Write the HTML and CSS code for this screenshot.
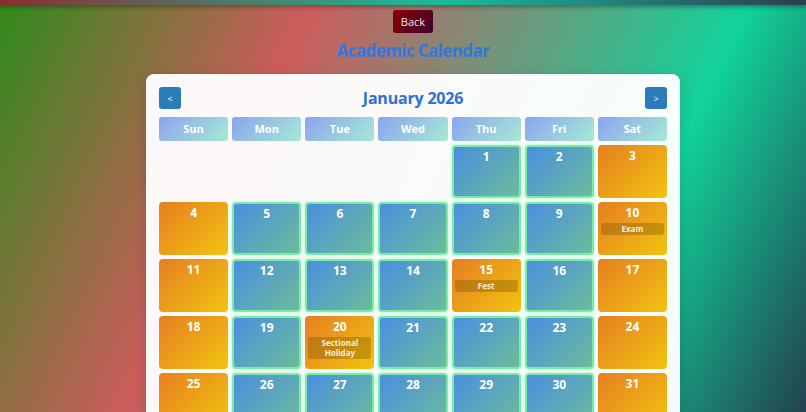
FILE: index.html
```html
<!DOCTYPE html>
<html lang="en">
<head>
<meta charset="utf-8">
<title>Academic Calendar</title>
<link rel="stylesheet" href="styles.css">
</head>
<body>
<div class="topbar"></div>
<main class="page">
  <button class="back">Back</button>
  <h1 class="title">Academic Calendar</h1>
  <section class="card">
    <div class="cal-head">
      <button class="nav">&lt;</button>
      <h2 class="month">January 2026</h2>
      <button class="nav">&gt;</button>
    </div>
    <div class="grid">
      <div class="dow">Sun</div><div class="dow">Mon</div><div class="dow">Tue</div><div class="dow">Wed</div><div class="dow">Thu</div><div class="dow">Fri</div><div class="dow">Sat</div>
      <div class="empty"></div><div class="empty"></div><div class="empty"></div><div class="empty"></div>
      <div class="day wk"><span class="num">1</span></div>
      <div class="day wk"><span class="num">2</span></div>
      <div class="day we"><span class="num">3</span></div>
      <div class="day we"><span class="num">4</span></div>
      <div class="day wk"><span class="num">5</span></div>
      <div class="day wk"><span class="num">6</span></div>
      <div class="day wk"><span class="num">7</span></div>
      <div class="day wk"><span class="num">8</span></div>
      <div class="day wk"><span class="num">9</span></div>
      <div class="day we"><span class="num">10</span><span class="ev">Exam</span></div>
      <div class="day we"><span class="num">11</span></div>
      <div class="day wk"><span class="num">12</span></div>
      <div class="day wk"><span class="num">13</span></div>
      <div class="day wk"><span class="num">14</span></div>
      <div class="day we"><span class="num">15</span><span class="ev">Fest</span></div>
      <div class="day wk"><span class="num">16</span></div>
      <div class="day we"><span class="num">17</span></div>
      <div class="day we"><span class="num">18</span></div>
      <div class="day wk"><span class="num">19</span></div>
      <div class="day we"><span class="num">20</span><span class="ev">Sectional Holiday</span></div>
      <div class="day wk"><span class="num">21</span></div>
      <div class="day wk"><span class="num">22</span></div>
      <div class="day wk"><span class="num">23</span></div>
      <div class="day we"><span class="num">24</span></div>
      <div class="day we"><span class="num">25</span></div>
      <div class="day wk"><span class="num">26</span></div>
      <div class="day wk"><span class="num">27</span></div>
      <div class="day wk"><span class="num">28</span></div>
      <div class="day wk"><span class="num">29</span></div>
      <div class="day wk"><span class="num">30</span></div>
      <div class="day we"><span class="num">31</span></div>
    </div>
  </section>
</main>
</body>
</html>
```

FILE: styles.css
```css
html, body {
  margin: 0;
  padding: 0;
}
body {
  min-height: 100vh;
  background: linear-gradient(115deg, #2f8a1c 0%, #cd5c5c 31%, #11d39b 74%, #24384a 100%);
  font-family: "Open Sans", "Noto Sans", sans-serif;
  overflow: hidden;
}
.topbar {
  height: 5px;
  background: linear-gradient(90deg, #8b2f2f 0%, #1abc9c 55%, #2c3e50 100%);
  box-shadow: 0 2px 4px rgba(0, 0, 0, 0.35);
}
.page {
  display: flex;
  flex-direction: column;
  align-items: center;
  padding-left: 20px;
  padding-top: 5px;
}
.back {
  width: 40px;
  height: 23px;
  padding: 0;
  border: none;
  border-radius: 3px;
  background: linear-gradient(135deg, #8b0000, #3d0030);
  color: #f4e6ea;
  font-family: inherit;
  font-size: 11px;
  cursor: pointer;
}
.title {
  margin: 6px 0 11px;
  font-size: 17px;
  line-height: 24px;
  font-weight: 700;
  color: #2f78dd;
  letter-spacing: -0.6px;
}
.card {
  width: 534px;
  box-sizing: border-box;
  padding: 13px 13px 20px;
  border-radius: 8px;
  background: rgba(255, 255, 255, 0.96);
  box-shadow: 0 4px 14px rgba(0, 0, 0, 0.15);
}
.cal-head {
  display: flex;
  align-items: center;
  justify-content: space-between;
  margin-bottom: 8px;
}
.nav {
  width: 22px;
  height: 22px;
  padding: 0;
  border: none;
  border-radius: 3px;
  background: #2a7bb8;
  color: #fff;
  font-family: inherit;
  font-size: 9px;
}
.month {
  margin: 0;
  font-size: 16px;
  line-height: 22px;
  font-weight: 700;
  color: #2f6fd6;
  letter-spacing: -0.2px;
}
.grid {
  display: grid;
  grid-template-columns: repeat(7, 1fr);
  grid-template-rows: 24px;
  grid-auto-rows: 53px;
  gap: 4px;
}
.dow {
  border-radius: 3px;
  background: linear-gradient(135deg, #8aa4ef, #a6ead4);
  color: #fff;
  font-size: 11px;
  font-weight: 700;
  line-height: 24px;
  text-align: center;
}
.day {
  box-sizing: border-box;
  border-radius: 4px;
  padding: 3px;
  display: flex;
  flex-direction: column;
  align-items: stretch;
  color: #fff;
  text-align: center;
}
.num {
  font-size: 12px;
  line-height: 16px;
  font-weight: 700;
}
.wk {
  background: linear-gradient(135deg, #4a8fe0, #6cbc9b);
  border: 2px solid #79eda8;
  padding: 2px 1px;
  box-shadow: 0 0 3px rgba(110, 240, 170, 0.6);
}
.we {
  background: linear-gradient(135deg, #e67e22, #f1c40f);
}
.ev {
  margin-top: 2px;
  padding: 1px 3px;
  border-radius: 3px;
  background: rgba(90, 60, 0, 0.28);
  font-size: 8px;
  line-height: 10px;
  font-weight: 700;
  color: #f6eedc;
}
```
